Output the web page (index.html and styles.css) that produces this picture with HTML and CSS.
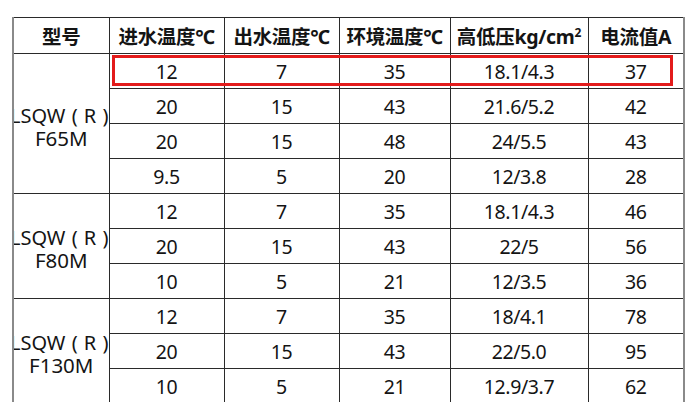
FILE: index.html
```html
<!DOCTYPE html>
<html lang="zh-CN">
<head>
<meta charset="utf-8">
<title>型号参数表</title>
<link rel="stylesheet" href="styles.css">
</head>
<body>
<div class="wrap">
  <table class="spec">
    <colgroup>
      <col class="c-model">
      <col class="c-in">
      <col class="c-out">
      <col class="c-env">
      <col class="c-pres">
      <col class="c-cur">
    </colgroup>
    <thead>
      <tr>
        <th>型号</th>
        <th>进水温度℃</th>
        <th>出水温度℃</th>
        <th>环境温度℃</th>
        <th>高低压kg/cm<sup>2</sup></th>
        <th>电流值A</th>
      </tr>
    </thead>
    <tbody>
      <tr>
        <td rowspan="4" class="model"><div class="model-in"><span class="series">LSQW ( R )</span><span>F65M</span></div></td>
        <td>12</td><td>7</td><td>35</td><td>18.1/4.3</td><td>37</td>
      </tr>
      <tr><td>20</td><td>15</td><td>43</td><td>21.6/5.2</td><td>42</td></tr>
      <tr><td>20</td><td>15</td><td>48</td><td>24/5.5</td><td>43</td></tr>
      <tr><td>9.5</td><td>5</td><td>20</td><td>12/3.8</td><td>28</td></tr>
      <tr>
        <td rowspan="3" class="model"><div class="model-in"><span class="series">LSQW ( R )</span><span>F80M</span></div></td>
        <td>12</td><td>7</td><td>35</td><td>18.1/4.3</td><td>46</td>
      </tr>
      <tr><td>20</td><td>15</td><td>43</td><td>22/5</td><td>56</td></tr>
      <tr><td>10</td><td>5</td><td>21</td><td>12/3.5</td><td>36</td></tr>
      <tr>
        <td rowspan="3" class="model"><div class="model-in"><span class="series">LSQW ( R )</span><span>F130M</span></div></td>
        <td>12</td><td>7</td><td>35</td><td>18/4.1</td><td>78</td>
      </tr>
      <tr><td>20</td><td>15</td><td>43</td><td>22/5.0</td><td>95</td></tr>
      <tr><td>10</td><td>5</td><td>21</td><td>12.9/3.7</td><td>62</td></tr>
    </tbody>
  </table>
  <div class="highlight"></div>
</div>
</body>
</html>
```
FILE: styles.css
```css
html, body {
  margin: 0;
  padding: 0;
  background: #ffffff;
}

body {
  font-family: "Noto Sans", "Noto Sans CJK SC", sans-serif;
  color: #141414;
}

.wrap {
  position: relative;
  padding: 17px 0 0 12px;
}

.spec {
  border-collapse: collapse;
  table-layout: fixed;
  width: 671px;
  border-left: 2px solid #8a8a8a;
  border-right: 2px solid #8a8a8a;
  border-top: 1px solid #555;
  border-bottom: 1px solid #222;
}

.c-model { width: 96px; }
.c-in { width: 115px; }
.c-out { width: 115px; }
.c-env { width: 111px; }
.c-pres { width: 138px; }
.c-cur { width: 96px; }

.spec th,
.spec td {
  border: 1px solid #2a2a2a;
  text-align: center;
  padding: 0;
  white-space: nowrap;
}

.spec th {
  height: 35px;
  font-family: "Noto Sans", "Noto Sans CJK SC", sans-serif;
  font-weight: 700;
  font-size: 19.5px;
  letter-spacing: -0.3px;
}

.spec th sup {
  font-size: 12px;
  line-height: 0;
  vertical-align: 7px;
}

.spec td {
  height: 33px;
  font-size: 19.5px;
  letter-spacing: -0.4px;
  line-height: 1;
  padding-top: 1px;
}

.spec tbody tr td {
  border-top-color: #444;
}

.spec td.model {
  overflow: hidden;
  border-left: none;
  padding-top: 6px;
}

.model-in {
  display: flex;
  flex-direction: column;
  align-items: center;
  line-height: 22px;
  font-size: 20.5px;
  letter-spacing: 0;
}

.model-in span {
  white-space: nowrap;
}

.model-in .series {
  font-size: 20px;
  word-spacing: 1px;
  margin-right: 4px;
}

.highlight {
  position: absolute;
  left: 112px;
  top: 55px;
  width: 555px;
  height: 25px;
  border: 3px solid #e31b1b;
}
```
